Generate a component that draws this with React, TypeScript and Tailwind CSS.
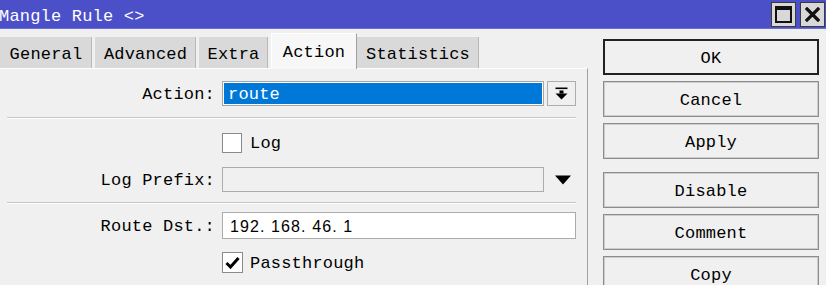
import React from "react";

const mono = "font-['Liberation_Mono',monospace] text-[17px] tracking-[0.2px]";

function Tab({ label, w, active }: { label: string; w: string; active?: boolean }) {
  if (active) {
    return (
      <div
        className={`${w} h-[36px] -mb-px relative z-10 flex items-center justify-center bg-[#f7f7f7] border-l border-t border-white border-r border-r-[#a0a0a0] text-black`}
      >
        <span className="relative top-[1px]">{label}</span>
      </div>
    );
  }
  return (
    <div
      className={`${w} h-[31px] flex items-center justify-center bg-[#d9d9d9] border-r-[3px] border-r-[#f0f0f0] shadow-[inset_-1px_0_0_#b8b8b8] text-black`}
    >
      <span className="relative top-[2px]">{label}</span>
    </div>
  );
}

function Btn({ label, def, mt }: { label: string; def?: boolean; mt?: string }) {
  return (
    <div
      className={`h-[36px] ${mt ?? ""} flex items-center justify-center bg-[#f0f0f0] ${
        def
          ? "border-2 border-[#222]"
          : "border border-[#8c8c8c] shadow-[inset_0_0_0_1px_#cdcdcd]"
      } text-black`}
    >
      <span className="relative top-[2px]">{label}</span>
    </div>
  );
}

function Sep() {
  return <div className="ml-[7px] mr-[11px] h-[2px] border-t border-[#c6c6c6] border-b border-b-white" />;
}

function Label({ text }: { text: string }) {
  return <div className="w-[215px] text-right shrink-0 text-black relative top-[1px]">{text}</div>;
}

export default function App() {
  return (
    <div className={`w-[826px] h-[285px] overflow-hidden bg-[#f0f0f0] ${mono}`}>
      {/* Title bar */}
      <div className="h-[29px] bg-[#4b4fc8] flex items-center justify-between border-b border-[#6a6ed4]">
        <div className="text-white leading-none -ml-[1px] relative top-[2px]">Mangle Rule &lt;&gt;</div>
        <div className="flex gap-[4px] pr-[1px] items-center">
          <div className="w-[25px] h-[25px] bg-[#d8d8d8] border border-[#3a3a3a] flex items-center justify-center">
            <svg width="17" height="17" viewBox="0 0 17 17">
              <rect x="1" y="1" width="15" height="15" fill="none" stroke="#111" strokeWidth="2" />
              <rect x="1" y="1" width="15" height="3" fill="#111" />
            </svg>
          </div>
          <div className="w-[25px] h-[25px] bg-[#d8d8d8] border border-[#3a3a3a] flex items-center justify-center">
            <svg width="15" height="15" viewBox="0 0 15 15">
              <path d="M2 2 L13 13 M13 2 L2 13" stroke="#111" strokeWidth="3.2" strokeLinecap="square" />
            </svg>
          </div>
        </div>
      </div>

      <div className="flex">
        {/* Left tab area */}
        <div className="w-[588px] shrink-0 flex flex-col">
          <div className="h-[39px] flex items-end">
            <Tab label="General" w="w-[95px]" />
            <Tab label="Advanced" w="w-[104px]" />
            <Tab label="Extra" w="w-[72px]" />
            <Tab label="Action" w="w-[86px]" active />
            <Tab label="Statistics" w="w-[125px]" />
          </div>
          <div className="h-[217px] border-t border-white border-r border-r-[#a0a0a0] flex flex-col">
            {/* Action */}
            <div className="mt-[12px] flex items-center h-[25px]">
              <Label text="Action:" />
              <div className="ml-[7px] w-[322px] h-[25px] border border-[#a5a5a5] bg-white p-[1px]">
                <div className="h-full bg-[#0078d7] text-white flex items-center pl-[4px] leading-none">
                  <span className="relative top-[1px]">route</span>
                </div>
              </div>
              <div className="ml-[3px] w-[29px] h-[25px] border border-[#adadad] bg-[#f0f0f0] flex items-center justify-center">
                <svg width="13" height="13" viewBox="0 0 13 13">
                  <rect x="0.5" y="0.5" width="12" height="1.6" fill="#000" />
                  <rect x="4.5" y="3.5" width="4" height="3" fill="#000" />
                  <polygon points="0.5,6.5 12.5,6.5 6.5,12.5" fill="#000" />
                </svg>
              </div>
            </div>

            <div className="mt-[11px]">
              <Sep />
            </div>

            {/* Log */}
            <div className="mt-[14px] flex items-center h-[20px]">
              <div className="w-[222px] shrink-0" />
              <div className="w-[20px] h-[20px] border border-[#8a8a8a] bg-white" />
              <div className="ml-[8px] text-black relative top-[1px]">Log</div>
            </div>

            {/* Log Prefix */}
            <div className="mt-[14px] flex items-center h-[25px]">
              <Label text="Log Prefix:" />
              <div className="ml-[7px] w-[322px] h-[25px] border border-[#acacac] bg-[#f0f0f0]" />
              <div className="ml-[11px]">
                <svg width="16" height="10" viewBox="0 0 16 10">
                  <polygon points="0,0.5 16,0.5 8,9.5" fill="#000" />
                </svg>
              </div>
            </div>

            <div className="mt-[10px]">
              <Sep />
            </div>

            {/* Route Dst */}
            <div className="mt-[8px] flex items-center h-[27px]">
              <Label text="Route Dst.:" />
              <div className="ml-[7px] w-[354px] h-[27px] border border-[#acacac] bg-white flex items-center pl-[7px] font-['Liberation_Sans',sans-serif] text-[16px] tracking-[1.1px] text-black">
                <span className="relative top-[1px]">192. 168. 46. 1</span>
              </div>
            </div>

            {/* Passthrough */}
            <div className="mt-[13px] flex items-center h-[21px]">
              <div className="w-[222px] shrink-0" />
              <div className="w-[21px] h-[21px] border border-[#8a8a8a] bg-white flex items-center justify-center">
                <svg width="15" height="13" viewBox="0 0 15 13">
                  <path d="M1.5 7 L5.5 11 L13.5 2" fill="none" stroke="#000" strokeWidth="3" />
                </svg>
              </div>
              <div className="ml-[7px] text-black relative top-[1px]">Passthrough</div>
            </div>
          </div>
        </div>

        {/* Right buttons */}
        <div className="ml-[15px] mt-[10px] w-[216px] flex flex-col gap-[6px]">
          <Btn label="OK" def />
          <Btn label="Cancel" />
          <Btn label="Apply" />
          <Btn label="Disable" mt="mt-[7px]" />
          <Btn label="Comment" />
          <Btn label="Copy" />
        </div>
      </div>
    </div>
  );
}
